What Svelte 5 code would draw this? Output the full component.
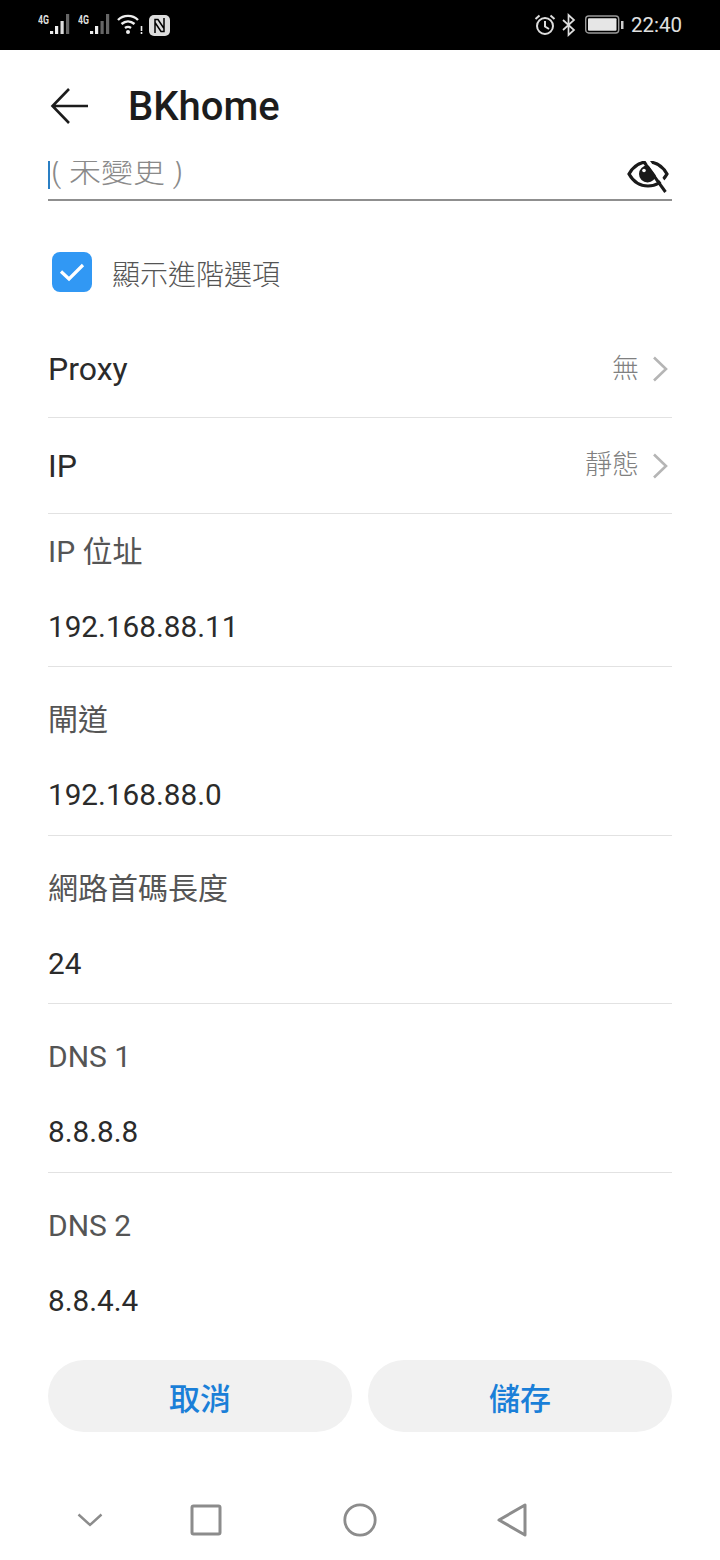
<script>
  const fields = [
    { label: "IP 位址", value: "192.168.88.11", first: true },
    { label: "閘道", value: "192.168.88.0" },
    { label: "網路首碼長度", value: "24", short: true },
    { label: "DNS 1", value: "8.8.8.8" },
    { label: "DNS 2", value: "8.8.4.4", last: true }
  ];
  const links = [
    { label: "Proxy", value: "無" },
    { label: "IP", value: "靜態" }
  ];
</script>

<div class="screen">
  <div class="status-bar">
    <div class="status-group">
      <svg width="36" height="24" viewBox="0 0 36 24">
        <text x="0" y="11" class="net" textLength="11" lengthAdjust="spacingAndGlyphs">4G</text>
        <rect x="12" y="18" width="3.2" height="3" fill="#eee" />
        <rect x="17" y="13" width="3.2" height="8" fill="#eee" />
        <rect x="22.5" y="8" width="3.2" height="13" fill="#ddd" />
        <rect x="28" y="1" width="3.2" height="20" fill="#666" />
      </svg>
      <svg class="second" width="36" height="24" viewBox="0 0 36 24">
        <text x="0" y="11" class="net" textLength="11" lengthAdjust="spacingAndGlyphs">4G</text>
        <rect x="12" y="18" width="3.2" height="3" fill="#eee" />
        <rect x="17" y="13" width="3.2" height="8" fill="#eee" />
        <rect x="22.5" y="8" width="3.2" height="13" fill="#666" />
        <rect x="28" y="1" width="3.2" height="20" fill="#666" />
      </svg>
      <svg class="wifi" width="26" height="24" viewBox="0 0 26 24" fill="none" stroke="#eee" stroke-width="2.400">
        <path d="M1 7C6.500 1.500 15.500 1.500 21 7" />
        <path d="M4.500 11C8.500 7.500 13.500 7.500 17.500 11" />
        <path d="M8 15C10 13.500 12 13.500 14 15" />
        <circle cx="11" cy="19" r="2" fill="#eee" stroke="none" />
        <path d="M24.500 13v5M24.500 19v2" stroke-width="1.600" />
      </svg>
      <svg class="nfc" width="21" height="21" viewBox="0 0 21 21">
        <rect width="21" height="21" rx="5" fill="#ddd" />
        <path d="M6 18V4.500h3l6 9M15 3v13.500h-3l-6-9" fill="none" stroke="#000" stroke-width="1.500" />
      </svg>
    </div>
    <div class="status-group">
      <svg width="22" height="24" viewBox="0 0 22 24" fill="none" stroke="#ddd" stroke-width="2">
        <circle cx="11" cy="13" r="8" />
        <path d="M11 8v5.500l4 2.500M1.500 6L5.500 2.500M20.500 6L16.500 2.500" />
      </svg>
      <svg class="bt" width="16" height="24" viewBox="0 0 16 24" fill="none" stroke="#ddd" stroke-width="1.700">
        <path d="M2 7l11 10-5.500 5V2L13 7 2 17" />
      </svg>
      <svg class="battery" width="39" height="20" viewBox="0 0 39 20">
        <rect x="0.700" y="1" width="33" height="17" rx="3" fill="none" stroke="#999" stroke-width="1.400" />
        <rect x="3" y="3.200" width="28.500" height="12.600" rx="1" fill="#e6e6e6" />
        <rect x="36" y="6" width="2.500" height="8" fill="#ccc" />
      </svg>
      <span class="time">22:40</span>
    </div>
  </div>

  <header class="title-bar">
    <svg width="40" height="40" viewBox="0 0 40 40" fill="none" stroke="#1c1c1c" stroke-width="2.600">
      <path d="M38 20H3M19 3L2.500 20 19 37" />
    </svg>
    <h1>BKhome</h1>
  </header>

  <main class="content">
    <div class="password">
      <span class="caret"></span>
      <span class="placeholder">( 未變更 )</span>
      <svg class="eye" width="42" height="36" viewBox="0 0 42 36" fill="none" stroke="#1a1a1a">
        <path d="M2 17C11 1 31 1 40 17 31 33 11 33 2 17Z" stroke-width="3.200" />
        <circle cx="20.500" cy="17" r="8.500" fill="#1a1a1a" stroke="none" />
        <circle cx="17" cy="13.500" r="1.800" fill="#fff" stroke="none" />
        <path d="M18.800 1.500L42 33" stroke="#fff" stroke-width="3.800" />
        <path d="M15.500 3L38.500 35" stroke-width="3" />
      </svg>
    </div>

    <label class="advanced">
      <span class="checkbox">
        <svg width="26" height="20" viewBox="0 0 26 20" fill="none" stroke="#fff" stroke-width="3.200">
          <path d="M2 9.500l8 7.500L24 3" />
        </svg>
      </span>
      <span class="advanced-text">顯示進階選項</span>
    </label>

    {#each links as link}
      <div class="link-row">
        <span class="link-label">{link.label}</span>
        <span class="link-value">{link.value}</span>
        <svg class="chevron" width="16" height="26" viewBox="0 0 16 26" fill="none" stroke="#b5b5b5" stroke-width="2.600">
          <path d="M2 1.500L14 13 2 24.500" />
        </svg>
      </div>
    {/each}

    {#each fields as field}
      <div class="field" class:first={field.first} class:short={field.short} class:last={field.last}>
        <div class="field-label">{field.label}</div>
        <div class="field-value">{field.value}</div>
      </div>
    {/each}

    <div class="actions">
      <button>取消</button>
      <button>儲存</button>
    </div>
  </main>

  <nav class="nav-bar">
    <svg width="28" height="16" viewBox="0 0 28 16" fill="none" stroke="#8c8c8c" stroke-width="2.400">
      <path d="M2.500 2.500L14 13 25.500 2.500" />
    </svg>
    <svg width="32" height="32" viewBox="0 0 32 32" fill="none" stroke="#8c8c8c" stroke-width="3">
      <rect x="2" y="2" width="28" height="28" rx="1.500" />
    </svg>
    <svg width="34" height="34" viewBox="0 0 34 34" fill="none" stroke="#8c8c8c" stroke-width="2.800">
      <circle cx="17" cy="17" r="15.200" />
    </svg>
    <svg width="30" height="34" viewBox="0 0 30 34" fill="none" stroke="#8c8c8c" stroke-width="3" stroke-linejoin="round">
      <path d="M2 17L28 2V32Z" />
    </svg>
  </nav>
</div>

<style>
  :global(body) {
    margin: 0;
    background: #fff;
  }

  .screen {
    display: flex;
    flex-direction: column;
    width: 720px;
    height: 1560px;
    overflow: hidden;
    background: #fff;
    font-family: Roboto, "Noto Sans CJK TC", sans-serif;
    color: #2b2b2b;
  }

  .status-bar {
    display: flex;
    flex: 0 0 50px;
    align-items: center;
    justify-content: space-between;
    box-sizing: border-box;
    padding: 0 38px;
    background: #000;
  }

  .status-group {
    display: flex;
    align-items: center;
  }

  .net {
    fill: #ddd;
    font: 700 12px Roboto, sans-serif;
  }

  .second {
    margin-left: 4px;
  }

  .wifi {
    margin-left: 3px;
  }

  .nfc {
    margin-left: 6px;
  }

  .bt {
    margin-left: 5px;
  }

  .battery {
    margin-left: 8px;
  }

  .time {
    margin-left: 7px;
    color: #e0e0e0;
    font-size: 20.5px;
    line-height: 1;
  }

  .title-bar {
    display: flex;
    flex: 0 0 auto;
    align-items: center;
    box-sizing: border-box;
    height: 111px;
    padding: 36px 0 35px 50px;
  }

  h1 {
    margin: 2px 0 0 38px;
    color: #1c1c1c;
    font-size: 40px;
    font-weight: 500;
    line-height: 1;
  }

  .content {
    display: flex;
    flex: 0 0 auto;
    flex-direction: column;
    padding: 0 48px;
  }

  .password {
    display: flex;
    align-items: flex-start;
    box-sizing: border-box;
    height: 40px;
    overflow: hidden;
    border-bottom: 2px solid #8f8f8f;
  }

  .caret {
    flex: 0 0 auto;
    width: 2px;
    height: 28px;
    background: #2a7fc4;
  }

  .placeholder {
    margin: -6px 0 0 1px;
    color: #8a8a8a;
    font-size: 32px;
    font-weight: 300;
    line-height: 32px;
  }

  .eye {
    margin: -4px 3px 0 auto;
  }

  .advanced {
    display: flex;
    align-items: center;
    height: 40px;
    margin: 51px 0 29px 4px;
  }

  .checkbox {
    display: flex;
    align-items: center;
    justify-content: center;
    width: 40px;
    height: 40px;
    border-radius: 8px;
    background: #3198f4;
  }

  .advanced-text {
    margin-left: 20px;
    padding-top: 8px;
    color: #555;
    font-size: 28px;
    font-weight: 300;
    line-height: 1;
  }

  .link-row {
    display: flex;
    align-items: center;
    box-sizing: border-box;
    height: 97px;
    border-bottom: 1px solid #e2e2e2;
  }

  .link-row + .link-row {
    height: 96px;
  }

  .link-label {
    margin-right: auto;
    font-size: 32px;
    line-height: 1;
  }

  .link-value {
    margin-right: 13px;
    color: #808080;
    font-size: 27px;
    font-weight: 300;
    line-height: 1;
  }

  .chevron {
    margin-right: 4px;
  }

  .field {
    display: flex;
    flex-direction: column;
    box-sizing: border-box;
    height: 169px;
    padding-top: 34px;
    border-bottom: 1px solid #e2e2e2;
  }

  .field.first {
    height: 153px;
    padding-top: 19px;
  }

  .field.short {
    height: 168px;
  }

  .field.last {
    height: 187px;
    border-bottom: 0;
  }

  .field-label {
    color: #555;
    font-size: 30px;
    line-height: 38px;
  }

  .field-value {
    margin-top: 37px;
    color: #2b2b2b;
    font-size: 29.7px;
    line-height: 38px;
  }

  .actions {
    display: flex;
    gap: 16px;
  }

  button {
    flex: 1;
    height: 72px;
    border: 0;
    border-radius: 36px;
    background: #f1f1f1;
    color: #1a7fd8;
    font: 500 31px Roboto, "Noto Sans CJK TC", sans-serif;
  }

  .nav-bar {
    display: grid;
    flex: 0 0 auto;
    grid-template-columns: 180px 52px 256px 48px;
    align-items: center;
    justify-items: center;
    height: 80px;
    margin-top: 48px;
  }
</style>
